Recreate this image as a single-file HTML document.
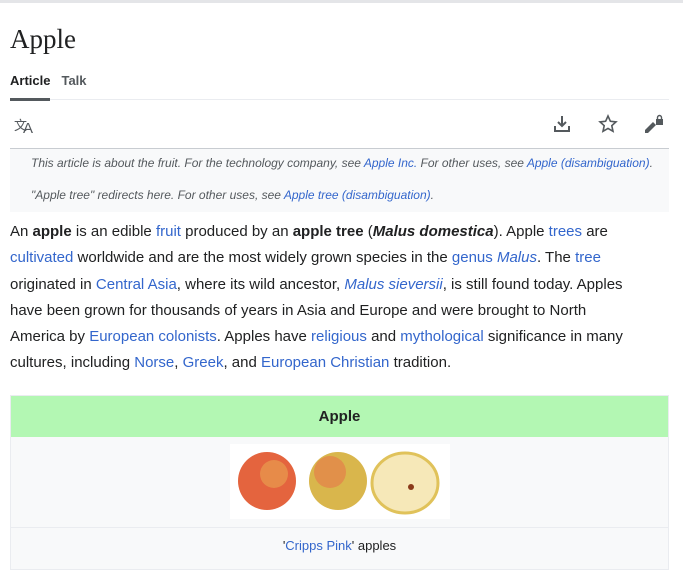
<!DOCTYPE html>
<html><head><meta charset="utf-8"><style>
*{margin:0;padding:0;box-sizing:border-box}
body{width:683px;height:565px;overflow:hidden;background:#fff;font-family:"Liberation Sans",sans-serif;color:#202122;position:relative}
a{color:#3366cc;text-decoration:none}
.top{position:absolute;left:0;top:0;width:683px;height:3px;background:#e4e5e8}
h1{position:absolute;left:10px;top:24px;font-family:"Liberation Serif",serif;font-weight:normal;font-size:27px;color:#202122}
.tabs{position:absolute;left:10px;top:73px;font-size:13px;font-weight:bold;color:#54595d}
.tabs span{margin-right:11px}
.tabline{position:absolute;left:10px;top:99px;width:659px;height:1px;background:#eaecf0}
.tabu{position:absolute;left:10px;top:98px;width:40px;height:3px;background:#54595d}
.icon{position:absolute;top:114px}
.hat{position:absolute;left:10px;top:148px;width:659px;height:64px;background:#f8f9fa;border-top:1px solid #c8ccd1;font-style:italic;font-size:12px;color:#54595d;padding-left:21px}
.hat p{position:absolute;left:21px;white-space:nowrap}
.para{position:absolute;left:10px;top:219px;font-size:15px;line-height:26.3px;white-space:nowrap;letter-spacing:0}
.ib{position:absolute;left:10px;top:395px;width:659px;height:175px;background:#f8f9fa;border:1px solid #eaecf0}
.ibh{height:41px;background:#b3f7b3;text-align:center;font-weight:bold;font-size:15px;line-height:41px}
.img{position:absolute;left:219px;top:48px;width:220px;height:75px;background:#fff}
.cap{position:absolute;left:0;top:131px;width:657px;border-top:1px solid #eaecf0;text-align:center;font-size:13px;padding-top:10px}
</style></head><body>
<div class="top"></div>
<h1>Apple</h1>
<div class="tabs"><span style="color:#202122">Article</span><span>Talk</span></div>
<div class="tabline"></div><div class="tabu"></div>
<div class="icon" style="left:14px;font-size:13px;color:#54595d;top:115px">文<span style="font-size:15px;position:relative;left:-4px;top:3px">A</span></div>
<svg class="icon" style="left:552px" width="20" height="20" viewBox="0 0 20 20"><path d="M10 2v10M6 8l4 4 4-4M3 12v5h14v-5" stroke="#54595d" stroke-width="2" fill="none"/></svg>
<svg class="icon" style="left:598px" width="20" height="20" viewBox="0 0 20 20"><path d="M10 2l2.4 5.3 5.6.6-4.2 3.8 1.2 5.6L10 14.4 5 17.3l1.2-5.6L2 7.9l5.6-.6z" stroke="#54595d" stroke-width="1.6" fill="none"/></svg>
<svg class="icon" style="left:644px" width="22" height="20" viewBox="0 0 22 20"><path d="M1 16l8-8 3 3-8 8H1z" fill="#54595d"/><rect x="12" y="5" width="7" height="6" fill="#54595d"/><path d="M13.5 5V3.5a2 2 0 014 0V5" stroke="#54595d" stroke-width="1.4" fill="none"/></svg>
<div class="hat">
<p style="top:7px">This article is about the fruit. For the technology company, see <a>Apple Inc.</a> For other uses, see <a>Apple (disambiguation)</a>.</p>
<p style="top:39px">"Apple tree" redirects here. For other uses, see <a>Apple tree (disambiguation)</a>.</p>
</div>
<div class="para">An <b>apple</b> is an edible <a>fruit</a> produced by an <b>apple tree</b> (<b><i>Malus domestica</i></b>). Apple <a>trees</a> are<br>
<a>cultivated</a> worldwide and are the most widely grown species in the <a>genus <i>Malus</i></a>. The <a>tree</a><br>
originated in <a>Central Asia</a>, where its wild ancestor, <a><i>Malus sieversii</i></a>, is still found today. Apples<br>
have been grown for thousands of years in Asia and Europe and were brought to North<br>
America by <a>European colonists</a>. Apples have <a>religious</a> and <a>mythological</a> significance in many<br>
cultures, including <a>Norse</a>, <a>Greek</a>, and <a>European Christian</a> tradition.</div>
<div class="ib"><div class="ibh">Apple</div>
<div class="img"><svg width="220" height="75">
<circle cx="37" cy="37" r="29" fill="#e4643e"/><circle cx="44" cy="30" r="14" fill="#e9a552" opacity=".6"/>
<circle cx="108" cy="37" r="29" fill="#d9b64c"/><circle cx="100" cy="28" r="16" fill="#e6774a" opacity=".6"/>
<ellipse cx="175" cy="39" rx="33" ry="30" fill="#f6e8b8" stroke="#e0c25a" stroke-width="3"/><circle cx="181" cy="43" r="3" fill="#8a3a1a"/></svg></div>
<div class="cap">'<a>Cripps Pink</a>' apples</div>
</div>
</body></html>
